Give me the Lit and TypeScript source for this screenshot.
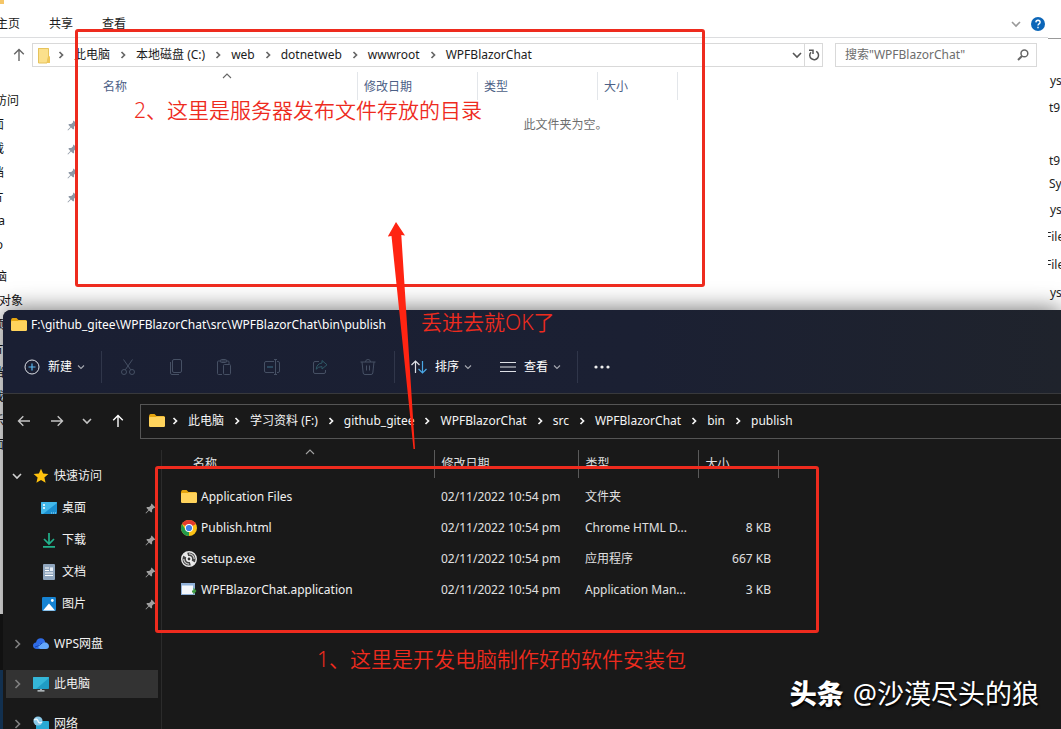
import { LitElement, html, css, svg, TemplateResult } from "lit";
import { customElement } from "lit/decorators.js";
import { styleMap } from "lit/directives/style-map.js";

const icon = (w: number, h: number, body: unknown) => html`
  <svg width=${w} height=${h} viewBox="0 0 ${w} ${h}" fill="none" aria-hidden="true">${body}</svg>`;

const chevron = (dir: "right" | "down" | "up", bold = false) => {
  const d = { right: "M3.5 2 L6.5 5 L3.5 8", down: "M2 3.5 L5 6.5 L8 3.5", up: "M1 7 L5 3 L9 7" }[dir];
  return icon(10, 10, svg`<path d=${d} stroke="currentColor" stroke-width=${bold ? 1.7 : 1.1} />`);
};

const wideChevron = (dir: "right" | "down") => {
  const d = { right: "M3.5 1 L7.5 5 L3.5 9", down: "M1 3 L5 7 L9 3" }[dir];
  return icon(10, 10, svg`<path d=${d} stroke="currentColor" stroke-width="1.6"/>`);
};

const folder = icon(16, 16, svg`
  <path d="M0 3.5 Q0 1 1.5 1 H5.5 L7.5 3 H14.5 Q16 3 16 4.5 V8 H0Z" fill="#e5a50f"/>
  <rect x="0" y="4" width="16" height="10" rx="1.2" fill="#ffd35c"/>
  <path d="M0 5.8 Q0 4.6 1.2 4.6 H6 L7.6 3.4 H14.8 Q16 3.4 16 5 V8 H0Z" fill="#ffd35c"/>`);

const oldFolder = icon(14, 17, svg`
  <path d="M1 1 H11.5 V9.5 H13 V16 H1Z" fill="#f8d775"/>
  <path d="M1.5 1.5 H11.5 V10 L10 16 H1.5Z" fill="#fbe08c" stroke="#e6c35c"/>
  <path d="M11 9.5 H13 V16 H10Z" fill="#efc65a"/>`);

const pin = icon(11, 11, svg`
  <path d="M6.6 .6 L10.4 4.4 L9.4 5 L8.8 4.9 L7 6.8 L7.1 8.8 L6.2 9.6 L4 7.4 L1 10.4 L.5 10 L3.4 6.9 L1.3 4.8 L2.2 3.9 L4.2 4 L6.1 2.2 L6 1.4Z" fill="currentColor"/>`);

const arrow = (turn: number) => icon(14, 14, svg`
  <g transform="rotate(${turn} 7 7)"><path d="M7 13 V1.5 M2.2 6.3 L7 1.5 L11.8 6.3" stroke="currentColor" stroke-width="1.4"/></g>`);

const cut = icon(18, 18, svg`
  <circle cx="5" cy="14" r="2.5"/><circle cx="13" cy="14" r="2.5"/>
  <path d="M6.3 11.8 L13.5 1.5 M11.7 11.8 L4.5 1.5"/>`);
const copy = icon(18, 18, svg`
  <rect x="5.5" y="1.5" width="9" height="13" rx="1.5"/><path d="M3.5 4 V15 Q3.5 16.5 5 16.5 H12"/>`);
const paste = icon(18, 18, svg`
  <path d="M7 16.5 H3.5 Q2.5 16.5 2.5 15.5 V4 Q2.5 3 3.5 3 H13 Q14 3 14 4 V6"/>
  <rect x="5.5" y="1.5" width="6" height="3" rx="1"/><rect x="8.5" y="6.5" width="7" height="10" rx="1"/>`);
const rename = icon(18, 18, svg`
  <path d="M11 3.5 H3 Q1.5 3.5 1.5 5 V13 Q1.5 14.5 3 14.5 H11 M14 3.5 H15 Q16.5 3.5 16.5 5 V13 Q16.5 14.5 15 14.5 H14 M12.5 1.5 V16.5 M11 1.5 H14 M11 16.5 H14"/>
  <path d="M4 9 H10" stroke="#3d7088"/>`);
const share = icon(18, 18, svg`
  <path d="M8 3.5 H4 Q2.5 3.5 2.5 5 V14 Q2.5 15.5 4 15.5 H13 Q14.5 15.5 14.5 14 V12"/>
  <path d="M11 2.5 L16 6.8 L11 11 V8.6 Q7 8.6 5.2 11.2 Q5.8 5.6 11 5Z" stroke="#2f5866"/>`);
const trash = icon(18, 18, svg`
  <path d="M1.5 4 H16.5 M6.5 4 Q6.5 1.5 9 1.5 Q11.5 1.5 11.5 4 M3 4 L4.2 15 Q4.4 16.5 6 16.5 H12 Q13.6 16.5 13.8 15 L15 4 M7.5 7.5 V12.5 M10.5 7.5 V12.5"/>`);

const plus = icon(16, 16, svg`
  <circle cx="8" cy="8" r="7" stroke="#dde0e6"/><path d="M8 4.5 V11.5 M4.5 8 H11.5" stroke="#5bb8f0" stroke-width="1.2"/>`);
const sort = icon(16, 16, svg`
  <path d="M4.5 14 V2 M.5 6 L4.5 2 L8.5 6" stroke="#dde0e6" stroke-width="1.2"/>
  <path d="M11.5 2 V14 M7.5 10 L11.5 14 L15.5 10" stroke="#4aa8e6" stroke-width="1.2"/>`);
const lines = icon(16, 16, svg`<path d="M0 3.5 H16 M0 8 H16 M0 12.5 H16" stroke="#dde0e6" stroke-width="1.2"/>`);
const dots = icon(16, 16, svg`
  <circle cx="2" cy="8" r="1.6" fill="#eee"/><circle cx="8" cy="8" r="1.6" fill="#eee"/><circle cx="14" cy="8" r="1.6" fill="#eee"/>`);

const star = icon(16, 16, svg`
  <path d="M8 .8 L10.1 5.6 L15.4 6.1 L11.4 9.6 L12.6 14.8 L8 12.1 L3.4 14.8 L4.6 9.6 L.6 6.1 L5.9 5.6Z" fill="#ffc20e"/>`);
const desktop = icon(16, 16, svg`
  <rect x="0" y="2" width="16" height="12" rx="1" fill="#1c8fd0"/><path d="M0 3 Q0 2 1 2 H15 Q16 2 16 3 L2 14 H1 Q0 14 0 13Z" fill="#42b8ea"/>
  <path d="M2 5 H4 M2 8 H4" stroke="#fff" stroke-width="1.3"/><path d="M10 13 H15" stroke="#9edcf7" stroke-dasharray="1 1"/>`);
const download = icon(16, 16, svg`
  <path d="M8 1 V11.5 M3 7 L8 12 L13 7 M2 14.8 H14" stroke="#22b28c" stroke-width="1.7"/>`);
const documents = icon(16, 16, svg`
  <rect x="2" y="0" width="12" height="16" rx="1" fill="#8fa5bd"/><path d="M4 4 H8 M4 6.5 H8 M4 9 H12 M4 11.5 H12" stroke="#fff" stroke-width="1.2"/><rect x="9" y="3.4" width="3" height="3.6" fill="#e8f0f8"/>`);
const pictures = icon(16, 16, svg`
  <rect x="1" y="1" width="14" height="14" rx="1.2" fill="#1683d2"/><path d="M2 14.5 L8 7.5 L14 14.5Z" fill="#fff"/><circle cx="11.3" cy="4.5" r="1.4" fill="#fff"/>`);
const cloud = icon(16, 16, svg`
  <path d="M4 13 Q0 12.6 0 9.5 Q.2 6.6 3 6.4 Q4 2 8 2.2 Q11.4 2.4 12.2 6 L6 13Z" fill="#2e6be6"/>
  <path d="M7.5 13 Q5 12.6 5.4 10 Q6 7.6 9 7.8 Q11 5.4 13.8 6.8 Q16 8 16 10 Q16 13 13 13Z" fill="#64a8fb"/>
  <path d="M2 11 Q7 10 9 7" stroke="#1747b8" stroke-width="1"/>`);
const computer = icon(16, 16, svg`
  <rect x="0" y="1" width="16" height="12" rx=".8" fill="#1f9cc4"/><path d="M0 2 Q0 1 1 1 H15 Q16 1 16 2 L3 13 H0Z" fill="#35b6d8"/>
  <path d="M8 13 V14 M4.5 14.9 H11.5" stroke="#d3dde2" stroke-width="1.4"/>`);
const network = icon(16, 16, svg`
  <rect x="3" y="5" width="13" height="9" rx=".8" fill="#29a9d4"/><circle cx="5" cy="5" r="4.6" fill="#8ac9e8"/>
  <path d="M1 4 Q4 2 5 5 T9 6" stroke="#e9f7ff" stroke-width="1.4"/><path d="M6 15 H13" stroke="#d3dde2"/>`);

const chrome = icon(16, 16, svg`
  <circle cx="8" cy="8" r="8" fill="#fbc116"/><path d="M8 8 L1.07 4 A8 8 0 0 1 14.93 4Z" fill="#e33b2e"/>
  <path d="M8 12 L8 16 A8 8 0 0 1 1.07 4 L4.6 10Z" fill="#229a4b"/>
  <circle cx="8" cy="8" r="4" fill="#fff"/><circle cx="8" cy="8" r="3.1" fill="#3f7ee8"/>`);
const disc = icon(16, 16, svg`
  <circle cx="8" cy="8" r="7.3" fill="#444" stroke="#e8e8e8" stroke-width="1.4"/>
  <path d="M8 8 L1.6 4.2 A7.4 7.4 0 0 1 6 1Z M8 8 L14.4 11.8 A7.4 7.4 0 0 1 10 15Z" fill="#e8e8e8"/>
  <path d="M8 2.8 A5.2 5.2 0 0 1 13.2 8 M8 13.2 A5.2 5.2 0 0 1 2.8 8" stroke="#cfcfcf" stroke-width="1.2"/>
  <circle cx="8" cy="8" r="3" fill="#f4f4f4"/><circle cx="8" cy="8" r="1.4" fill="#333"/>`);
const manifest = icon(16, 16, svg`
  <rect x="0" y="1" width="14" height="12" fill="#8fb0d8"/><rect x="1" y="3.5" width="11" height="8.5" fill="#f4f7fb"/>
  <path d="M11 8.5 H12.5 V5.5 L15.5 9 L12.5 12.5 V10.5 H11Z" fill="#3f9a3f"/>`);

interface Row { icon: TemplateResult; name: string; date: string; type: string; size: string; }

const ROWS: Row[] = [
  { icon: folder, name: "Application Files", date: "02/11/2022 10:54 pm", type: "文件夹", size: "" },
  { icon: chrome, name: "Publish.html", date: "02/11/2022 10:54 pm", type: "Chrome HTML D...", size: "8 KB" },
  { icon: disc, name: "setup.exe", date: "02/11/2022 10:54 pm", type: "应用程序", size: "667 KB" },
  { icon: manifest, name: "WPFBlazorChat.application", date: "02/11/2022 10:54 pm", type: "Application Man...", size: "3 KB" },
];

const PINNED = [
  { icon: desktop, name: "桌面" },
  { icon: download, name: "下载" },
  { icon: documents, name: "文档" },
  { icon: pictures, name: "图片" },
];

/* The tree is scrolled sideways: each label ends at its own right edge. */
const SERVER_TREE = [
  { text: "访问", end: 19 },
  { text: "面", end: 4, pin: true },
  { text: "载", end: 4, pin: true },
  { text: "档", end: 4, pin: true },
  { text: "片", end: 4, pin: true },
  { text: "a", end: 5 },
  { text: "o", end: 3 },
  { text: "脑", end: 7, top: true },
  { text: "对象", end: 23 },
  { text: "频", end: 4 },
  { text: "片", end: 4 },
  { text: "档", end: 4 },
  { text: "载", end: 4 },
  { text: "乐", end: 4 },
  { text: "面", end: 4 },
];

const BEHIND = [
  { text: "ys", y: 81, x: 2 }, { text: "t9", y: 108, x: 1 }, { text: "t9", y: 161, x: 1 }, { text: "Sy", y: 184, x: 1 },
  { text: "ys", y: 210, x: 2 }, { text: "File", y: 237, x: -3 }, { text: "File", y: 265, x: -3 }, { text: "ys", y: 293, x: 2 },
];

@customElement("server-window")
export class ServerWindow extends LitElement {
  static styles = css`
    :host { display: flex; flex-direction: column; min-width: 0; overflow: hidden; background: #fff; color: #1c1c1c; }
    * { box-sizing: border-box; }
    svg { display: block; flex: none; }
    button { font: inherit; color: inherit; background: none; border: 0; padding: 0; display: flex; align-items: center; white-space: nowrap; }
    .ribbon { display: flex; align-items: center; height: 38px; padding: 10px 3px 0 0; border-bottom: 1px solid #dcdddf; gap: 29px; }
    .ribbon .first { margin-left: -4px; }
    .grow { flex: 1; }
    .ribbon .tools { display: flex; align-items: center; gap: 10px; color: #999; }
    .bar { display: flex; align-items: center; height: 34px; padding: 0 11px 0 12px; gap: 6px; color: #666; }
    .path { flex: 1; min-width: 0; display: flex; align-items: center; height: 24px; border: 1px solid #d9d9d9; padding-left: 4px; color: #1c1c1c; }
    .path ol { display: flex; margin: 0; padding: 0; list-style: none; align-items: center; }
    .path li { display: flex; align-items: center; }
    .sep { width: 26px; display: flex; justify-content: center; color: #666; }
    .path li:first-child .sep { width: 23px; padding-right: 4px; }
    .path a { color: inherit; text-decoration: none; white-space: nowrap; }
    .drop { color: #555; padding-right: 2px; }
    .refresh { border-left: 1px solid #d9d9d9; height: 22px; width: 18px; justify-content: center; color: #555; }
    .search { display: flex; align-items: center; width: 202px; height: 24px; margin-left: 6px; border: 1px solid #d9d9d9; padding: 0 7px 0 9px; color: #666; }
    .search input { flex: 1; min-width: 0; border: 0; outline: 0; background: none; font: inherit; padding: 0; color: #555; }
    .search input::placeholder { color: #6d6d6d; opacity: 1; }
    .main { flex: 1; display: flex; min-height: 0; }
    .tree { width: 83px; margin: 0; padding: 17px 5px 0 0; list-style: none; }
    .tree li { display: flex; align-items: center; height: 24px; justify-content: space-between; color: #111; }
    .tree li.top { margin-top: 8px; }
    .tree span { display: flex; justify-content: flex-end; white-space: nowrap; }
    .tree svg { color: #8d97a5; }
    .list { flex: 1; min-width: 0; }
    .cols { display: grid; grid-template-columns: 275px 120px 120px 80px; height: 28px; color: #4c6086; }
    .cols button { position: relative; border-right: 1px solid #e3e6ea; padding: 2px 0 0 6px; }
    .cols button:first-child { padding-left: 20px; }
    .caret { position: absolute; left: 139px; top: -1px; color: #666; }
    .empty { margin: 0; padding-top: 17px; text-align: center; color: #6d6d6d; }
  `;

  render() {
    const crumbs = ["此电脑", "本地磁盘 (C:)", "web", "dotnetweb", "wwwroot", "WPFBlazorChat"];
    return html`
      <header class="ribbon">
        <button class="first">主页</button><button>共享</button><button>查看</button>
        <span class="grow"></span>
        <div class="tools">
          <button aria-label="展开功能区">${wideChevron("down")}</button>
          <button aria-label="帮助">${icon(14, 14, svg`<circle cx="7" cy="7" r="7" fill="#0c66b8"/><path d="M4.9 5.4 Q5 3.3 7 3.3 Q9.1 3.4 9.1 5.2 Q9 6.4 7.8 7 Q7 7.5 7 8.6 M7 9.8 V11.2" stroke="#fff" stroke-width="1.4"/>`)}</button>
        </div>
      </header>
      <div class="bar">
        <button aria-label="上移">${arrow(0)}</button>
        <nav class="path" aria-label="路径">
          ${oldFolder}
          <ol>${crumbs.map(c => html`<li><span class="sep">${chevron("right", true)}</span><a href="#">${c}</a></li>`)}</ol>
          <span class="grow"></span>
          <button class="drop" aria-label="历史">${wideChevron("down")}</button>
          <button class="refresh" aria-label="刷新">${icon(12, 12, svg`<path d="M8.2 2.4 A4.4 4.4 0 1 1 3 3.2 M1 1.2 H5 V5" stroke="currentColor" stroke-width="1.5"/>`)}</button>
        </nav>
        <label class="search">
          <input type="text" aria-label="搜索" placeholder='搜索"WPFBlazorChat"'>
          ${icon(12, 12, svg`<circle cx="7.4" cy="4.4" r="3.4" stroke="#666" stroke-width="1.5"/><path d="M5 7 L1 11" stroke="#666" stroke-width="2"/>`)}
        </label>
      </div>
      <div class="main">
        <ul class="tree">
          ${SERVER_TREE.map(n => html`<li class=${n.top ? "top" : ""}>
            <span style=${styleMap({ width: `${n.end}px` })}>${n.text}</span>${n.pin ? pin : ""}</li>`)}
        </ul>
        <section class="list">
          <div class="cols">
            <button>名称<span class="caret">${chevron("up")}</span></button>
            <button>修改日期</button><button>类型</button><button>大小</button>
          </div>
          <p class="empty">此文件夹为空。</p>
        </section>
      </div>`;
  }
}

@customElement("publish-window")
export class PublishWindow extends LitElement {
  static styles = css`
    :host { display: flex; flex-direction: column; overflow: hidden; background: #191919; color: #f2f2f2; border-top-left-radius: 8px; box-shadow: 0 0 24px rgba(0, 0, 0, .6); }
    * { box-sizing: border-box; }
    svg { display: block; flex: none; }
    button { font: inherit; color: inherit; background: none; border: 0; padding: 0; display: flex; align-items: center; white-space: nowrap; }
    a { color: inherit; text-decoration: none; white-space: nowrap; }
    .chrome { background: linear-gradient(90deg, #1a1f33 0%, #1b2033 60%, #1f232c 100%); border-bottom: 1px solid #38393c; }
    .title { display: flex; align-items: center; gap: 4px; height: 30px; padding-left: 8px; }
    .title h1 { margin: 0; font: inherit; color: #fff; white-space: nowrap; }
    .commands { display: flex; align-items: center; height: 53px; padding: 1px 0 0 21px; }
    .commands .text { gap: 8px; color: #fff; }
    .commands .text svg:last-child { margin-left: -4px; color: #a5a8b0; }
    .rule { width: 1px; height: 32px; background: #30364a; }
    .new { padding-right: 15px; }
    .ghost { display: flex; gap: 30px; padding: 0 17px; }
    .ghost svg { stroke: #465064; }
    .sorting { display: flex; gap: 27px; padding: 0 15px 0 16px; }
    .more { padding-left: 16px; }
    .bar { display: flex; align-items: center; height: 54px; color: #c4c4c4; }
    .nav { display: flex; justify-content: space-between; width: 137px; align-items: center; padding: 0 15px 0 14px; }
    .nav .last { color: #fff; }
    .path { flex: 1; display: flex; align-items: center; height: 35px; border: 1px solid #555; border-right: 0; padding-left: 8px; color: #f5f5f5; }
    .path ol { display: flex; margin: 0; padding: 0; list-style: none; }
    .path li { display: flex; align-items: center; }
    .sep { width: 26px; display: flex; justify-content: center; }
    .path li:first-child .sep { width: 23px; padding-right: 3px; }
    .main { flex: 1; display: flex; min-height: 0; padding-top: 2px; }
    .side { width: 159px; flex: none; border-right: 1px solid #2b2b2b; padding: 10px 3px 0 3px; }
    .side a { display: flex; align-items: center; height: 32px; padding-left: 6px; }
    .side a > svg { color: #808080; }
    .side .open > svg { color: #d0d0d0; }
    .side .name { margin-left: 5px; }
    .side .lead { margin-left: 11px; }
    .side .child { padding: 0 2px 0 35px; justify-content: space-between; }
    .side .child div { display: flex; align-items: center; }
    .side .pin { color: #a0a0a0; }
    .side .group { margin-top: 8px; }
    .side .on { height: 28px; margin: 10px 0; background: #333; }
    .files { flex: 1; min-width: 0; padding-left: 13px; }
    table { width: 603px; border-collapse: collapse; table-layout: fixed; color: #e0e0e0; }
    th { position: relative; height: 28px; padding: 0 0 1px 7px; text-align: left; font-weight: 400; border-right: 1px solid #5a5a5a; }
    th:first-child { padding-left: 18px; }
    .c1 { width: 259px; } .c2 { width: 144px; } .c3 { width: 120px; } .c4 { width: 80px; }
    .caret { position: absolute; left: 130px; top: -3px; color: #a0a0a0; }
    tbody::before { content: ""; display: block; height: 3px; }
    td { height: 31px; padding: 0 0 0 7px; white-space: nowrap; }
    td:first-child { padding-left: 6px; }
    td:last-child { padding: 0 7px 0 0; text-align: right; }
    .file { display: flex; align-items: center; gap: 4px; color: #f0f0f0; }
  `;

  render() {
    const crumbs = ["此电脑", "学习资料 (F:)", "github_gitee", "WPFBlazorChat", "src", "WPFBlazorChat", "bin", "publish"];
    return html`
      <header class="chrome">
        <div class="title">${folder}<h1>F:\\github_gitee\\WPFBlazorChat\\src\\WPFBlazorChat\\bin\\publish</h1></div>
        <div class="commands">
          <div class="new"><button class="text">${plus}<span>新建</span>${chevron("down")}</button></div>
          <span class="rule"></span>
          <div class="ghost">
            <button aria-label="剪切">${cut}</button><button aria-label="复制">${copy}</button>
            <button aria-label="粘贴">${paste}</button><button aria-label="重命名">${rename}</button>
            <button aria-label="共享">${share}</button><button aria-label="删除">${trash}</button>
          </div>
          <span class="rule"></span>
          <div class="sorting">
            <button class="text">${sort}<span>排序</span>${chevron("down")}</button>
            <button class="text">${lines}<span>查看</span>${chevron("down")}</button>
          </div>
          <span class="rule"></span>
          <button class="more" aria-label="更多">${dots}</button>
        </div>
      </header>
      <div class="bar">
        <div class="nav">
          <button aria-label="后退">${arrow(-90)}</button>
          <button aria-label="前进">${arrow(90)}</button>
          <button aria-label="最近">${wideChevron("down")}</button>
          <button class="last" aria-label="上移">${arrow(0)}</button>
        </div>
        <nav class="path" aria-label="路径">
          ${folder}
          <ol>${crumbs.map(c => html`<li><span class="sep">${chevron("right", true)}</span><a href="#">${c}</a></li>`)}</ol>
        </nav>
      </div>
      <div class="main">
        <nav class="side" aria-label="导航窗格">
          <a class="open" href="#">${wideChevron("down")}<span class="lead">${star}</span><span class="name">快速访问</span></a>
          ${PINNED.map(p => html`<a class="child" href="#"><div>${p.icon}<span class="name">${p.name}</span></div><span class="pin">${pin}</span></a>`)}
          <a class="group" href="#">${wideChevron("right")}<span class="lead">${cloud}</span><span class="name">WPS网盘</span></a>
          <a class="on" href="#">${wideChevron("right")}<span class="lead">${computer}</span><span class="name">此电脑</span></a>
          <a href="#">${wideChevron("right")}<span class="lead">${network}</span><span class="name">网络</span></a>
        </nav>
        <section class="files">
          <table>
            <thead><tr>
              <th class="c1">名称<span class="caret">${chevron("up")}</span></th>
              <th class="c2">修改日期</th><th class="c3">类型</th><th class="c4">大小</th>
            </tr></thead>
            <tbody>
              ${ROWS.map(r => html`<tr><td><div class="file">${r.icon}<span>${r.name}</span></div></td><td>${r.date}</td><td>${r.type}</td><td>${r.size}</td></tr>`)}
            </tbody>
          </table>
        </section>
      </div>`;
  }
}

@customElement("app-root")
export class AppRoot extends LitElement {
  static styles = css`
    :host { display: block; position: relative; height: 100vh; overflow: hidden; background: #fff; font: 12px/16px "Noto Sans", "Noto Sans CJK SC", sans-serif; }
    .back { display: flex; height: 100%; }
    server-window { flex: 1; }
    .behind { position: relative; width: 13px; flex: none; overflow: hidden; color: #222; border-top: 38px solid #fff; }
    .behind::before { content: ""; display: block; height: 1px; background: #999; }
    .behind span { position: absolute; white-space: nowrap; transform: translateY(-50%); }
    .edge { position: absolute; left: 0; top: 614px; bottom: 0; width: 3px; background: linear-gradient(#111 0 56px, #12304f 56px); }
    .tab { position: absolute; left: 0; top: 0; width: 4px; height: 4px; background: #f5c668; }
    publish-window { position: absolute; left: 3px; right: 0; top: 310px; bottom: 0; }
    .frame { position: absolute; box-sizing: border-box; border: 3px solid #ee2b1e; border-radius: 3px; }
    .server { left: 75px; top: 29px; width: 630px; height: 258px; }
    .local { left: 155px; top: 466px; width: 664px; height: 167px; }
    .arrow { position: absolute; left: 386px; top: 220px; }
    .note { position: absolute; margin: 0; color: #ee2b1e; font-size: 21px; line-height: 28px; font-weight: 350; white-space: nowrap; }
    .n1 { left: 317px; top: 645px; }
    .n2 { left: 134px; top: 96px; }
    .n3 { left: 421px; top: 308px; }
    .mark { position: absolute; right: 22px; bottom: 17px; margin: 0; display: flex; align-items: center; gap: 9px; color: #fff; font-size: 27px; line-height: 36px; white-space: nowrap; text-shadow: 1px 2px 2px #000; }
    .mark b { font-weight: 900; }
  `;

  render() {
    return html`
      <div class="back">
        <server-window></server-window>
        <div class="behind">${BEHIND.map(b => html`<span style=${styleMap({ top: `${b.y - 38}px`, left: `${b.x}px` })}>${b.text}</span>`)}</div>
      </div>
      <span class="tab"></span>
      <publish-window></publish-window>
      <span class="edge"></span>
      <div class="frame server"></div>
      <div class="frame local"></div>
      <svg class="arrow" width="32" height="232" viewBox="0 0 32 232" aria-hidden="true">
        <path d="M10 2 L19 15.5 L15.3 15 L29 229 L27.5 229 L5.5 16 L1.8 16.5Z" fill="#ff2412"/>
      </svg>
      <p class="note n2">2、这里是服务器发布文件存放的目录</p>
      <p class="note n3">丢进去就OK了</p>
      <p class="note n1">1、这里是开发电脑制作好的软件安装包</p>
      <p class="mark"><b>头条</b><span>@沙漠尽头的狼</span></p>`;
  }
}
